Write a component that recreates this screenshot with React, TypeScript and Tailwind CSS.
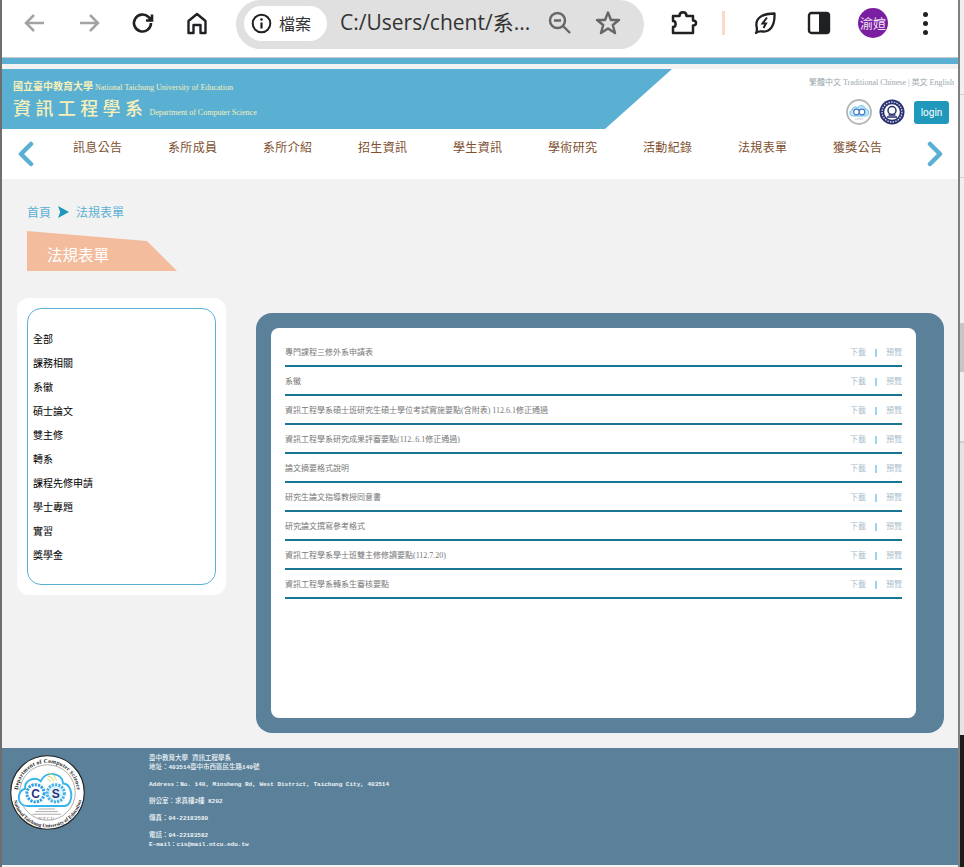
import React from "react";

const navItems = ["訊息公告", "系所成員", "系所介紹", "招生資訊", "學生資訊", "學術研究", "活動紀錄", "法規表單", "獲獎公告"];
const sideItems = ["全部", "課務相關", "系徽", "碩士論文", "雙主修", "轉系", "課程先修申請", "學士專題", "實習", "獎學金"];
const rows = [
  "專門課程三修外系申請表",
  "系徽",
  "資訊工程學系碩士班研究生碩士學位考試實施要點(含附表) 112.6.1修正通過",
  "資訊工程學系研究成果評審要點(112..6.1修正通過)",
  "論文摘要格式說明",
  "研究生論文指導教授同意書",
  "研究論文撰寫參考格式",
  "資訊工程學系學士班雙主修修讀要點(112.7.20)",
  "資訊工程學系轉系生審核要點",
];

function CsLogo({ size }: { size: number }) {
  return (
    <svg width={size} height={size} viewBox="0 0 100 100" className="shrink-0">
      <defs>
        <path id="logoTop" d="M10.500 50 A39.500 39.500 0 0 1 89.500 50" />
        <path id="logoBottom" d="M3.500 50 A46.500 46.500 0 0 0 96.500 50" />
      </defs>
      <circle cx="50" cy="50" r="49" fill="#fff" stroke="#222" strokeWidth="1.500" />
      <circle cx="50" cy="50" r="37" fill="#fff" stroke="#777" strokeWidth="0.800" />
      <g fontFamily="'Liberation Serif',serif" fontWeight="700" fill="#222">
        <text fontSize="7.600" letterSpacing="0.300">
          <textPath href="#logoTop" startOffset="50%" textAnchor="middle">Department of Computer Science</textPath>
        </text>
        <text fontSize="6.800">
          <textPath href="#logoBottom" startOffset="50%" textAnchor="middle">National Taichung University of Education</textPath>
        </text>
      </g>
      <path d="M23 68 C9 68 8 48 20 45 C19 33 34 28 41 35 C46 21 69 22 71 38 C84 38 86 66 73 68 Z" fill="#fff" stroke="#35b4ea" strokeWidth="2.600" />
      <path d="M50 24 a13 13 0 0 1 12 10 M50 28 a9 9 0 0 1 8 7 M50 32 a5 5 0 0 1 4 4" fill="none" stroke="#d9dc6a" strokeWidth="1.400" />
      <circle cx="34" cy="51" r="11.500" fill="#fff" stroke="#2e9fe0" strokeWidth="4" strokeDasharray="3 1.400" />
      <circle cx="61" cy="51" r="11.500" fill="#dff3fb" stroke="#49b5e6" strokeWidth="4" strokeDasharray="3 1.400" />
      <text x="34" y="57" textAnchor="middle" fontSize="16" fontWeight="700" fontFamily="'Liberation Sans',sans-serif" fill="#27347f">C</text>
      <text x="61" y="57" textAnchor="middle" fontSize="16" fontWeight="700" fontFamily="'Liberation Sans',sans-serif" fill="#27347f">S</text>
      <path d="M38 72H60 M34 75.500H64 M30 79H68" stroke="#aaa" strokeWidth="1.300" />
      <text x="49" y="87" textAnchor="middle" fontSize="6.500" letterSpacing="1" fontWeight="700" fontFamily="'Liberation Serif',serif" fill="#999">NTCU</text>
    </svg>
  );
}

function SmallCs() {
  return (
    <svg width="26" height="26" viewBox="0 0 26 26" className="shrink-0">
      <circle cx="13" cy="13" r="12" fill="#fff" stroke="#b5b5b5" strokeWidth="1.800" />
      <path d="M7 17 C3 17 3 12 6 11 C6 8 10 7 11.500 9 C13 5.500 19 6 19.500 10 C24 10 24 17 19 17 Z" fill="#bfe6f7" stroke="#62c0ea" strokeWidth="1" />
      <circle cx="10.500" cy="13" r="2.800" fill="#fff" stroke="#4a78c8" strokeWidth="1.200" />
      <circle cx="16" cy="13" r="2.800" fill="#fff" stroke="#4a78c8" strokeWidth="1.200" />
      <path d="M9 20H17" stroke="#ccc" strokeWidth="1" />
    </svg>
  );
}

function Seal() {
  return (
    <svg width="26" height="26" viewBox="0 0 26 26" className="shrink-0">
      <circle cx="13" cy="13" r="12.500" fill="#27306f" />
      <circle cx="13" cy="13" r="10" fill="none" stroke="#cfd2e6" strokeWidth="1.400" strokeDasharray="1.500 1.200" />
      <circle cx="13" cy="13" r="7.800" fill="#fff" />
      <circle cx="13" cy="11.500" r="4" fill="#fff" stroke="#27306f" strokeWidth="1.500" />
      <path d="M8 18H18 M9.500 16H16.500" stroke="#27306f" strokeWidth="1.500" />
    </svg>
  );
}

function Chevron({ right }: { right?: boolean }) {
  return (
    <svg width="18" height="26" viewBox="0 0 18 26" className="shrink-0">
      <path d={right ? "M4 3L14 13L4 23" : "M14 3L4 13L14 23"} fill="none" stroke="#5ab0d3" strokeWidth="4.500" strokeLinecap="round" strokeLinejoin="round" />
    </svg>
  );
}

function Toolbar() {
  return (
    <div className="flex h-[57px] items-start bg-white border-b border-[#c9c9c9] box-content">
      <div className="flex h-[46px] items-center pl-[19px] gap-[26px] w-[234px] shrink-0">
        <svg width="28" height="28" viewBox="0 0 28 28" className="shrink-0"><path d="M23 14H5 M13 6L5 14L13 22" fill="none" stroke="#a3a3a3" strokeWidth="2.500" /></svg>
        <svg width="28" height="28" viewBox="0 0 28 28" className="shrink-0"><path d="M5 14H23 M15 6L23 14L15 22" fill="none" stroke="#a3a3a3" strokeWidth="2.500" /></svg>
        <svg width="28" height="28" viewBox="0 0 28 28" className="shrink-0"><path d="M22 14A8.500 8.500 0 1 1 19.500 8 L23 11.500 M23 5.500V11.500H17" fill="none" stroke="#202124" strokeWidth="2.600" /></svg>
        <svg width="28" height="28" viewBox="0 0 28 28" className="shrink-0"><path d="M5.500 24V12L14 5L22.500 12V24H17.500V16H10.500V24Z" fill="none" stroke="#202124" strokeWidth="2.400" strokeLinejoin="round" /></svg>
      </div>
      <div className="flex h-[49px] w-[408px] shrink-0 items-center rounded-[25px] bg-[#e0e0e0] pl-[8px] pb-[3px]">
        <div className="flex h-[35px] w-[83px] items-center gap-[7px] rounded-full bg-white pl-[7px] shrink-0">
          <svg width="21" height="21" viewBox="0 0 21 21" className="shrink-0">
            <circle cx="10.500" cy="10.500" r="8.800" fill="none" stroke="#202124" strokeWidth="2" />
            <circle cx="10.500" cy="6.500" r="1.300" fill="#202124" />
            <path d="M10.500 9.500V15.500" stroke="#202124" strokeWidth="2.200" />
          </svg>
          <span className="text-[16px] text-[#333] font-['Noto_Sans_CJK_TC',sans-serif]">檔案</span>
        </div>
        <span className="ml-[13px] text-[21px] w-[196px] whitespace-nowrap text-[#333] font-['Open_Sans','Noto_Sans_CJK_TC',sans-serif]">C:/Users/chent/系...</span>
        <svg width="26" height="26" viewBox="0 0 26 26" className="shrink-0 ml-[11px]">
          <circle cx="10.500" cy="10.500" r="7.500" fill="none" stroke="#666" strokeWidth="2.400" />
          <path d="M7 10.500H14 M16 16L23 23" stroke="#666" strokeWidth="2.400" />
        </svg>
        <svg width="28" height="28" viewBox="0 0 28 28" className="shrink-0 ml-[21px]">
          <path d="M14 3.500L17 11H25L18.800 16L21 24L14 19.500L7 24L9.200 16L3 11H11Z" fill="none" stroke="#666" strokeWidth="2.400" strokeLinejoin="round" />
        </svg>
      </div>
      <div className="flex h-[46px] items-center pl-[26px]">
        <svg width="28" height="28" viewBox="0 0 28 28" className="shrink-0">
          <path d="M3 11V7H9.500C9.500 2 16.500 2 16.500 7H23V11.500C27 11.500 27 16.500 23 16.500V24H3V18C6.500 18 6.500 12 3 12Z" fill="none" stroke="#202124" strokeWidth="2.500" strokeLinejoin="round" />
        </svg>
        <div className="ml-[24px] h-[24px] w-[3px] bg-[#fbd9c4]" />
        <svg width="26" height="26" viewBox="0 0 26 26" className="shrink-0 ml-[27px]">
          <path d="M4 23C5.500 21 5 19.500 4.500 16C3.500 9 9 3.500 22.500 3.500C23 16 18 22 11 21.500C8 21.300 6.500 20.500 4 23Z" fill="none" stroke="#202124" strokeWidth="2.300" strokeLinejoin="round" />
          <path d="M15 7.500L10.500 13.500H14L11.500 18" fill="none" stroke="#202124" strokeWidth="2" />
        </svg>
        <svg width="24" height="24" viewBox="0 0 24 24" className="shrink-0 ml-[29px]">
          <rect x="2" y="2" width="20" height="20" rx="2.500" fill="none" stroke="#202124" strokeWidth="2.400" />
          <rect x="12" y="2" width="10" height="20" fill="#202124" />
        </svg>
        <div className="ml-[27px] flex h-[30px] w-[30px] shrink-0 items-center justify-center rounded-full bg-[#7b1fa2] text-[13px] text-[#f3e5f5] font-['Noto_Sans_CJK_TC',sans-serif]">渝媗</div>
        <div className="ml-[35px] flex flex-col gap-[4px]">
          <div className="h-[5px] w-[5px] rounded-full bg-[#202124]" />
          <div className="h-[5px] w-[5px] rounded-full bg-[#202124]" />
          <div className="h-[5px] w-[5px] rounded-full bg-[#202124]" />
        </div>
      </div>
    </div>
  );
}

function Header() {
  return (
    <div className="flex h-[60px] bg-white">
      <div className="h-[60px] w-[670px] shrink-0 bg-[#5ab0d3] pl-[11px] pt-[9px] text-[#f6efb8] font-['Liberation_Serif','Noto_Sans_CJK_TC',serif] [clip-path:polygon(0_0,100%_0,603px_100%,0_100%)]">
        <div className="flex items-baseline whitespace-nowrap">
          <span className="text-[10px] leading-[16px] font-['Noto_Sans_CJK_TC',sans-serif] font-bold">國立臺中教育大學</span>
          <span className="ml-[2px] text-[8px] leading-[16px]">National Taichung University of Education</span>
        </div>
        <div className="flex items-baseline whitespace-nowrap">
          <span className="text-[18px] leading-[22px] tracking-[4.400px] font-medium font-['Noto_Sans_CJK_TC',sans-serif]">資訊工程學系</span>
          <span className="ml-[2px] text-[8px] leading-[22px]">Department of Computer Science</span>
        </div>
      </div>
      <div className="flex flex-1 flex-col items-end pt-[8px] pr-[4px]">
        <div className="whitespace-nowrap text-[8px] leading-[12px] text-[#9aa7ad] font-['Liberation_Serif','Noto_Sans_CJK_TC',serif]">繁體中文 Traditional Chinese | 英文 English</div>
        <div className="mt-[10px] flex items-center pr-[5px]">
          <SmallCs />
          <div className="ml-[7px]"><Seal /></div>
          <div className="ml-[9px] flex h-[23px] w-[35px] items-center justify-center rounded-[3px] bg-[#2098bb] text-[10px] text-white font-['Roboto',sans-serif]">login</div>
        </div>
      </div>
    </div>
  );
}

function Nav() {
  return (
    <div className="flex h-[50px] items-center bg-white pl-[15px]">
      <Chevron />
      <div className="ml-[38px] mb-[14px] flex">
        {navItems.map((n) => (
          <div key={n} className="w-[95px] text-[12px] leading-[16px] tracking-[0.350px] text-[#80502f] whitespace-nowrap font-['Noto_Sans_CJK_TC',sans-serif]">{n}</div>
        ))}
      </div>
      <div className="ml-[-2px]"><Chevron right /></div>
    </div>
  );
}

function Sidebar() {
  return (
    <div className="ml-[15px] mt-[27px] h-[297px] w-[209px] shrink-0 rounded-[12px] bg-white p-[10px]">
      <div className="h-[277px] rounded-[14px] border border-[#5ab0d3] pl-[5px] pt-[18px]">
        {sideItems.map((s) => (
          <div key={s} className="h-[24px] text-[10px] leading-[24px] text-black font-['Noto_Sans_CJK_TC',sans-serif]">{s}</div>
        ))}
      </div>
    </div>
  );
}

function Panel() {
  return (
    <div className="ml-[30px] mt-[42px] h-[420px] w-[688px] shrink-0 rounded-[16px] bg-[#5a8199] py-[15px] pl-[15px] pr-[28px]">
      <div className="h-[390px] rounded-[8px] bg-white px-[14px] pt-[10px]">
        {rows.map((r) => (
          <div key={r} className="flex h-[29px] items-center justify-between border-b-2 border-[#1a7595] pt-[3px] text-[8px] text-[#777] font-['Liberation_Serif','Noto_Sans_CJK_TC',serif]">
            <span className="whitespace-nowrap">{r}</span>
            <span className="flex items-center whitespace-nowrap text-[#a9bccb]">
              <span>下載</span>
              <span className="mx-[9px] h-[8px] w-[2px] bg-[#9bd4ef]" />
              <span>預覽</span>
            </span>
          </div>
        ))}
      </div>
    </div>
  );
}

function Cjk({ children }: { children: React.ReactNode }) {
  return <span className="text-[6.500px] font-medium">{children}</span>;
}

function Footer() {
  const cls = "text-[6px] leading-[9px] font-bold text-[#f0f4f7] whitespace-nowrap";
  return (
    <div className="flex h-[117px] bg-[#5a8199] font-['Liberation_Mono','Noto_Sans_CJK_TC',monospace]">
      <div className="ml-[8px] mt-[7px]"><CsLogo size={75} /></div>
      <div className="ml-[64px] mt-[6px]">
        <div className={cls}><Cjk>臺中教育大學 資訊工程學系</Cjk></div>
        <div className={cls}><Cjk>地址：</Cjk>403514<Cjk>臺中市西區民生路</Cjk>140<Cjk>號</Cjk></div>
        <div className={`${cls} mt-[8px]`}>Address：No. 140, Minsheng Rd, West District, Taichung City, 403514</div>
        <div className={`${cls} mt-[8px]`}><Cjk>辦公室：求真樓</Cjk>2<Cjk>樓</Cjk> K202</div>
        <div className={`${cls} mt-[8px]`}><Cjk>傳真：</Cjk>04-22183580</div>
        <div className={`${cls} mt-[8px]`}><Cjk>電話：</Cjk>04-22183582</div>
        <div className={cls}>E-mail：cis@mail.ntcu.edu.tw</div>
      </div>
    </div>
  );
}

export default function App() {
  return (
    <div className="flex h-[867px] w-[964px] overflow-hidden bg-[#f2f2f2]">
      <div className="w-[2px] shrink-0 bg-[#6e6e6e]" />
      <div className="w-[956px] shrink-0">
        <Toolbar />
        <div className="h-[6px] bg-[#5ab0d3]" />
        <div className="h-[5px] bg-[#f2f2f2]" />
        <Header />
        <Nav />
        <div className="h-[569px] bg-[#f2f2f2]">
          <div className="flex items-center pl-[25px] pt-[25px] text-[12px] leading-[16px] text-[#5ab0d3] font-['Noto_Sans_CJK_TC',sans-serif]">
            <span>首頁</span>
            <span className="mx-[7px] h-[12px] w-[11px] bg-[#2098bb] [clip-path:polygon(0_0,100%_50%,0_100%,20%_50%)]" />
            <span>法規表單</span>
          </div>
          <div className="ml-[25px] mt-[11px] flex h-[40px] w-[150px] items-center bg-[#f3bc9d] pl-[20px] pt-[7px] text-[15.500px] text-white font-['Noto_Sans_CJK_TC',sans-serif] [clip-path:polygon(0_0,120px_10px,100%_100%,0_100%)]">法規表單</div>
          <div className="flex">
            <Sidebar />
            <Panel />
          </div>
        </div>
        <Footer />
      </div>
      <div className="w-[2px] shrink-0 bg-[#808080]" />
      <div className="flex w-[4px] shrink-0 flex-col bg-[#efefef]">
        <div className="h-[95px] shrink-0 border-b border-[#d0d0d0]" />
        <div className="h-[83px] shrink-0 border-b border-[#d0d0d0]" />
        <div className="h-[145px] shrink-0" />
        <div className="h-[49px] shrink-0 bg-[#c6c6c6]" />
        <div className="h-[71px] shrink-0 border-b-2 border-[#cfcfcf]" />
        <div className="flex-1 bg-[#e4e4e4]" />
        <div className="h-[132px] shrink-0 bg-[#1c1c1c]" />
      </div>
    </div>
  );
}
